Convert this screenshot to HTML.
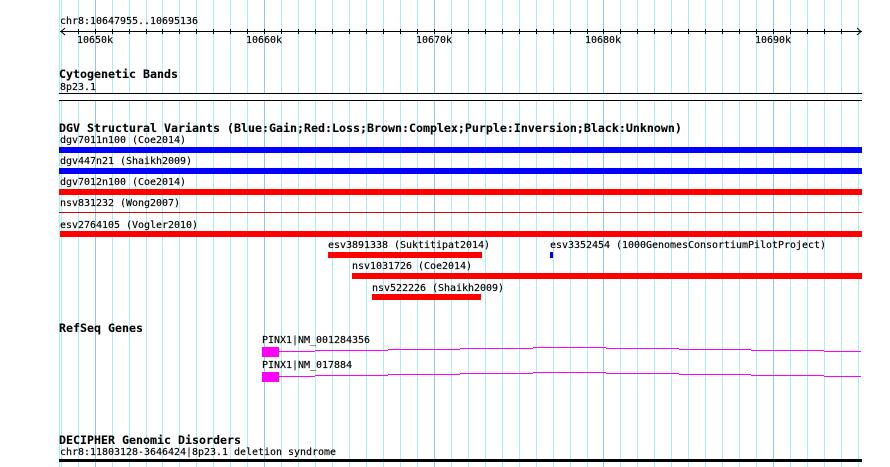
<!DOCTYPE html>
<html><head><meta charset="utf-8"><title>Genome tracks</title>
<style>
html,body{margin:0;padding:0;background:#fff;width:890px;height:467px;overflow:hidden}
svg{display:block}
text{font-family:"DejaVu Sans Mono","Liberation Mono",monospace;font-size:10px;letter-spacing:-.02px;fill:#000;stroke:#000;stroke-width:.15px}
.b{font-size:11.63px;font-weight:bold;letter-spacing:0;stroke-width:.1px}
</style></head><body>
<svg width="890" height="467" viewBox="0 0 890 467" shape-rendering="crispEdges">
<g fill="#aaeef0">
<rect x="59" y="0" width="1" height="467"/><rect x="61" y="0" width="1" height="467"/><rect x="78" y="0" width="1" height="467"/><rect x="112" y="0" width="1" height="467"/><rect x="129" y="0" width="1" height="467"/><rect x="146" y="0" width="1" height="467"/><rect x="162" y="0" width="1" height="467"/><rect x="179" y="0" width="1" height="467"/><rect x="196" y="0" width="1" height="467"/><rect x="213" y="0" width="1" height="467"/><rect x="230" y="0" width="1" height="467"/><rect x="247" y="0" width="1" height="467"/><rect x="281" y="0" width="1" height="467"/><rect x="298" y="0" width="1" height="467"/><rect x="315" y="0" width="1" height="467"/><rect x="332" y="0" width="1" height="467"/><rect x="349" y="0" width="1" height="467"/><rect x="366" y="0" width="1" height="467"/><rect x="383" y="0" width="1" height="467"/><rect x="400" y="0" width="1" height="467"/><rect x="417" y="0" width="1" height="467"/><rect x="451" y="0" width="1" height="467"/><rect x="468" y="0" width="1" height="467"/><rect x="485" y="0" width="1" height="467"/><rect x="502" y="0" width="1" height="467"/><rect x="519" y="0" width="1" height="467"/><rect x="536" y="0" width="1" height="467"/><rect x="553" y="0" width="1" height="467"/><rect x="570" y="0" width="1" height="467"/><rect x="587" y="0" width="1" height="467"/><rect x="620" y="0" width="1" height="467"/><rect x="637" y="0" width="1" height="467"/><rect x="654" y="0" width="1" height="467"/><rect x="671" y="0" width="1" height="467"/><rect x="688" y="0" width="1" height="467"/><rect x="705" y="0" width="1" height="467"/><rect x="722" y="0" width="1" height="467"/><rect x="739" y="0" width="1" height="467"/><rect x="756" y="0" width="1" height="467"/><rect x="790" y="0" width="1" height="467"/><rect x="807" y="0" width="1" height="467"/><rect x="824" y="0" width="1" height="467"/><rect x="841" y="0" width="1" height="467"/><rect x="858" y="0" width="1" height="467"/>
</g>
<g fill="#8ccbe6">
<rect x="95" y="0" width="1" height="467"/><rect x="264" y="0" width="1" height="467"/><rect x="434" y="0" width="1" height="467"/><rect x="603" y="0" width="1" height="467"/><rect x="773" y="0" width="1" height="467"/>
</g>

<!-- ruler -->
<rect x="60" y="31" width="802" height="1" fill="#000"/>
<g fill="#000">
<rect x="78" y="29" width="1" height="5"/><rect x="95" y="29" width="1" height="5"/><rect x="112" y="29" width="1" height="5"/><rect x="129" y="29" width="1" height="5"/><rect x="146" y="29" width="1" height="5"/><rect x="162" y="29" width="1" height="5"/><rect x="179" y="29" width="1" height="5"/><rect x="196" y="29" width="1" height="5"/><rect x="213" y="29" width="1" height="5"/><rect x="230" y="29" width="1" height="5"/><rect x="247" y="29" width="1" height="5"/><rect x="264" y="29" width="1" height="5"/><rect x="281" y="29" width="1" height="5"/><rect x="298" y="29" width="1" height="5"/><rect x="315" y="29" width="1" height="5"/><rect x="332" y="29" width="1" height="5"/><rect x="349" y="29" width="1" height="5"/><rect x="366" y="29" width="1" height="5"/><rect x="383" y="29" width="1" height="5"/><rect x="400" y="29" width="1" height="5"/><rect x="417" y="29" width="1" height="5"/><rect x="434" y="29" width="1" height="5"/><rect x="451" y="29" width="1" height="5"/><rect x="468" y="29" width="1" height="5"/><rect x="485" y="29" width="1" height="5"/><rect x="502" y="29" width="1" height="5"/><rect x="519" y="29" width="1" height="5"/><rect x="536" y="29" width="1" height="5"/><rect x="553" y="29" width="1" height="5"/><rect x="570" y="29" width="1" height="5"/><rect x="587" y="29" width="1" height="5"/><rect x="603" y="29" width="1" height="5"/><rect x="620" y="29" width="1" height="5"/><rect x="637" y="29" width="1" height="5"/><rect x="654" y="29" width="1" height="5"/><rect x="671" y="29" width="1" height="5"/><rect x="688" y="29" width="1" height="5"/><rect x="705" y="29" width="1" height="5"/><rect x="722" y="29" width="1" height="5"/><rect x="739" y="29" width="1" height="5"/><rect x="756" y="29" width="1" height="5"/><rect x="773" y="29" width="1" height="5"/><rect x="790" y="29" width="1" height="5"/><rect x="807" y="29" width="1" height="5"/><rect x="824" y="29" width="1" height="5"/><rect x="841" y="29" width="1" height="5"/>
</g>
<path d="M65 28L61 31.5L65 35M857 28L861 31.5L857 35" fill="none" stroke="#000" stroke-width="1" shape-rendering="auto"/>
<text x="60" y="24">chr8:10647955..10695136</text>
<text x="77" y="43">10650k</text>
<text x="246" y="43">10660k</text>
<text x="416" y="43">10670k</text>
<text x="585" y="43">10680k</text>
<text x="755" y="43">10690k</text>

<!-- cytobands -->
<rect x="59" y="93" width="803" height="8" fill="#fff"/>
<rect x="59" y="93" width="803" height="1" fill="#000"/>
<rect x="59" y="100" width="803" height="1" fill="#000"/>
<text class="b" x="59" y="78">Cytogenetic Bands</text>
<text x="60" y="90">8p23.1</text>

<!-- DGV -->
<text class="b" x="59" y="132">DGV Structural Variants (Blue:Gain;Red:Loss;Brown:Complex;Purple:Inversion;Black:Unknown)</text>
<text x="60" y="143">dgv7011n100 (Coe2014)</text>
<rect x="59" y="147" width="803" height="6" fill="#0000ff"/>
<text x="60" y="164">dgv447n21 (Shaikh2009)</text>
<rect x="59" y="168" width="803" height="6" fill="#0000ff"/>
<text x="60" y="185">dgv7012n100 (Coe2014)</text>
<rect x="59" y="189" width="803" height="6" fill="#ff0000"/>
<text x="60" y="206">nsv831232 (Wong2007)</text>
<rect x="59" y="212" width="803" height="1" fill="#e00000"/>
<text x="60" y="228">esv2764105 (Vogler2010)</text>
<rect x="60" y="231" width="802" height="6" fill="#ff0000"/>
<text x="328" y="248">esv3891338 (Suktitipat2014)</text>
<rect x="328" y="252" width="154" height="6" fill="#ff0000"/>
<text x="550" y="248">esv3352454 (1000GenomesConsortiumPilotProject)</text>
<rect x="550" y="252" width="3" height="6" fill="#0000ff"/>
<text x="352" y="269">nsv1031726 (Coe2014)</text>
<rect x="352" y="273" width="510" height="6" fill="#ff0000"/>
<text x="372" y="291">nsv522226 (Shaikh2009)</text>
<rect x="372" y="294" width="109" height="6" fill="#ff0000"/>

<!-- genes -->
<text class="b" x="59" y="332">RefSeq Genes</text>
<text x="262" y="343">PINX1|NM_001284356</text>
<g fill="#ff00ff">
<rect x="262" y="347" width="17" height="10"/>
<rect x="279" y="351" width="36" height="1"/><rect x="315" y="350" width="73" height="1"/><rect x="388" y="349" width="72" height="1"/><rect x="460" y="348" width="73" height="1"/><rect x="533" y="347" width="73" height="1"/><rect x="606" y="348" width="73" height="1"/><rect x="679" y="349" width="72" height="1"/><rect x="751" y="350" width="73" height="1"/><rect x="824" y="351" width="37" height="1"/>
</g>
<text x="262" y="368">PINX1|NM_017884</text>
<g fill="#ff00ff">
<rect x="262" y="372" width="17" height="10"/>
<rect x="279" y="376" width="36" height="1"/><rect x="315" y="375" width="73" height="1"/><rect x="388" y="374" width="72" height="1"/><rect x="460" y="373" width="73" height="1"/><rect x="533" y="372" width="73" height="1"/><rect x="606" y="373" width="73" height="1"/><rect x="679" y="374" width="72" height="1"/><rect x="751" y="375" width="73" height="1"/><rect x="824" y="376" width="37" height="1"/>
</g>

<!-- decipher -->
<text class="b" x="59" y="444">DECIPHER Genomic Disorders</text>
<text x="60" y="455">chr8:11803128-3646424|8p23.1 deletion syndrome</text>
<rect x="59" y="459" width="803" height="3" fill="#000"/>
</svg>
</body></html>
